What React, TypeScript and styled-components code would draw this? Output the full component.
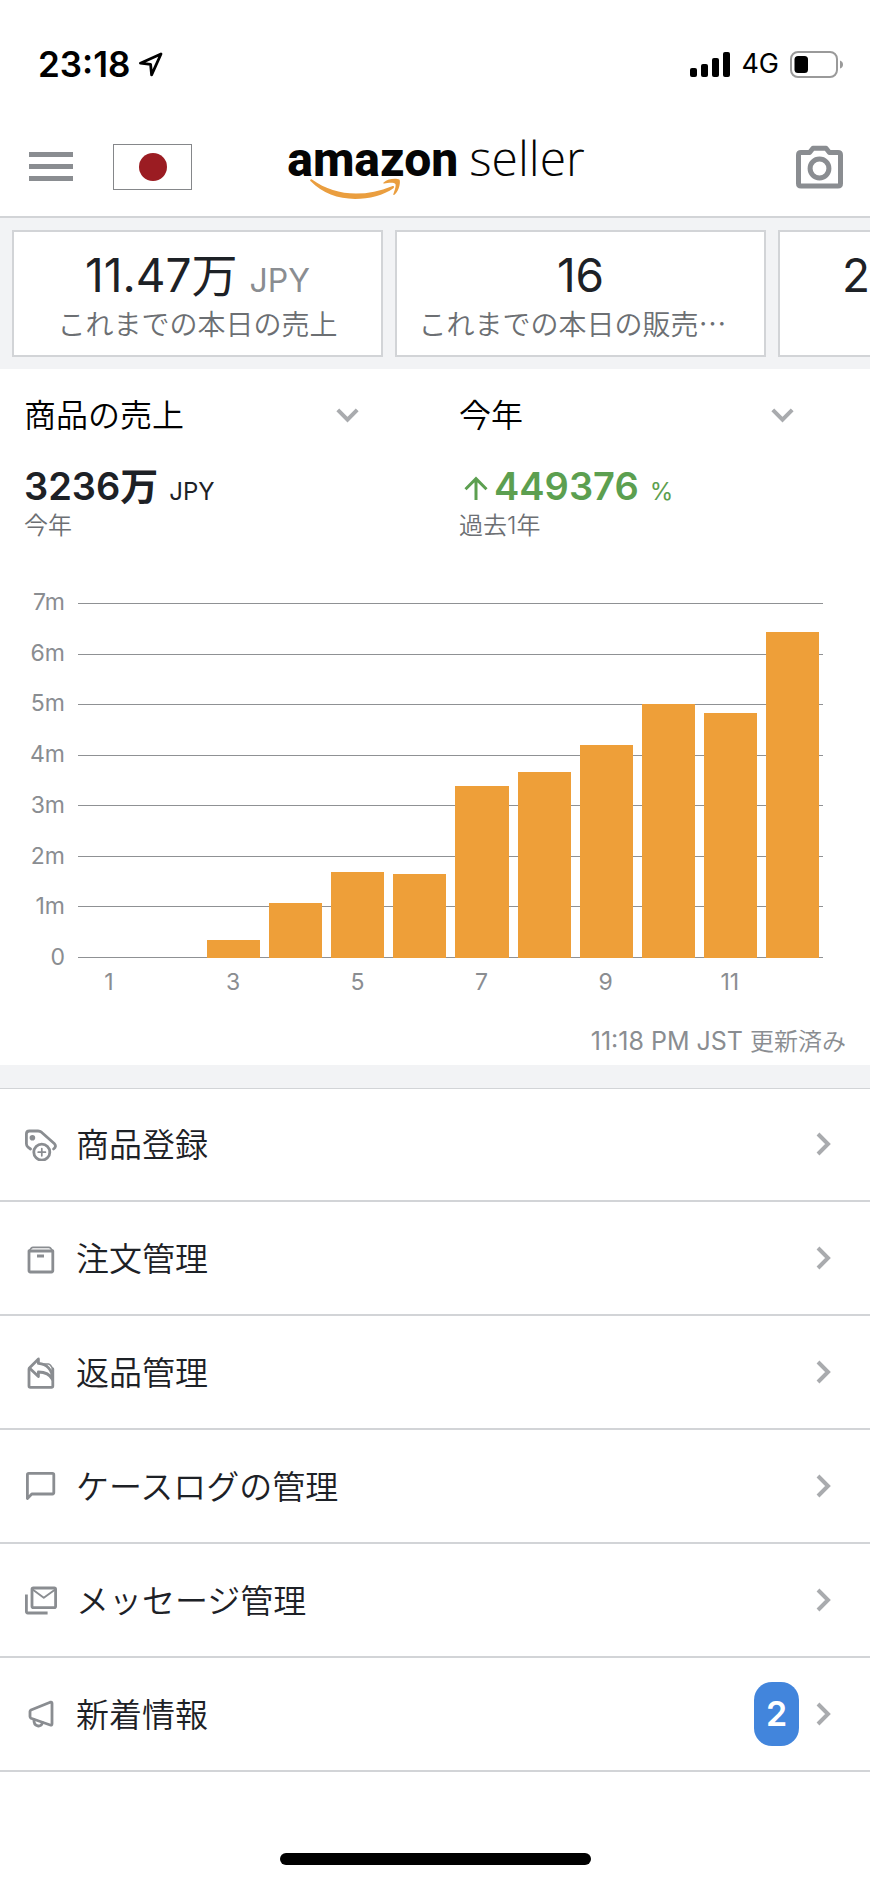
import React from 'react';
import styled, { createGlobalStyle } from 'styled-components';

const GlobalStyle = createGlobalStyle`
  *, *::before, *::after { box-sizing: border-box; }
  body {
    margin: 0;
    background: #ffffff;
    color: #1d2126;
    font-family: Inter, "Noto Sans CJK JP", sans-serif;
    font-weight: 400;
  }
  button, select { font: inherit; color: inherit; }
`;

const gray = '#8a8d91';
const line = '#d2d4d7';
const band = '#f2f3f5';

const Screen = styled.div`
  display: flex;
  flex-direction: column;
  min-height: 100vh;
`;

const StatusBar = styled.div`
  display: flex;
  align-items: center;
  justify-content: space-between;
  padding: 43px 26px 31px 38px;
  height: 116px;
  color: #000000;
`;

const StatusGroup = styled.div<{ $gap: number }>`
  display: flex;
  align-items: center;
  gap: ${(p) => p.$gap}px;
`;

const Clock = styled.time`
  font-size: 35px;
  line-height: 42px;
  font-weight: 600;
`;

const Network = styled.span`
  font-size: 27px;
  line-height: 42px;
  font-weight: 400;
`;

const Header = styled.header`
  display: grid;
  grid-template-columns: 1fr auto 1fr;
  align-items: center;
  height: 102px;
  padding: 2px 27px 0 29px;
  border-bottom: 2px solid ${line};
`;

const HeaderStart = styled.div`
  display: flex;
  align-items: center;
  gap: 40px;
`;

const IconButton = styled.button`
  display: flex;
  padding: 0;
  border: 0;
  background: none;
  color: ${gray};
  cursor: pointer;
`;

const CameraButton = styled(IconButton)`
  justify-self: end;
`;

const Flag = styled.button`
  display: flex;
  align-items: center;
  justify-content: center;
  width: 79px;
  height: 46px;
  padding: 0;
  border: 1px solid #85878a;
  background: #ffffff;
  cursor: pointer;
  &::before {
    content: '';
    width: 28px;
    height: 28px;
    border-radius: 50%;
    background: #9b1c22;
  }
`;

const Logo = styled.h1`
  position: relative;
  display: flex;
  align-items: baseline;
  gap: 11px;
  margin: 0 0 16px;
  color: #050505;
  line-height: 60px;
  font-weight: 400;
`;

const LogoName = styled.span`
  font-family: "Roboto", "Liberation Sans", sans-serif;
  font-size: 48px;
  font-weight: 800;
`;

const LogoProduct = styled.span`
  font-family: "Open Sans", "Noto Sans", sans-serif;
  font-size: 48px;
  font-weight: 300;
`;

const Smile = styled.svg`
  position: absolute;
  left: 23px;
  top: 50px;
`;

const Stats = styled.section`
  display: flex;
  gap: 12px;
  padding: 12px;
  background: ${band};
  overflow: hidden;
`;

const StatCard = styled.article<{ $start?: boolean }>`
  flex: 0 0 371px;
  height: 127px;
  padding: ${(p) => (p.$start ? '15px 0 0 62px' : '15px 0 0')};
  border: 2px solid ${line};
  background: #ffffff;
  text-align: ${(p) => (p.$start ? 'left' : 'center')};
  white-space: nowrap;
`;

const StatValue = styled.div`
  height: 56px;
  font-size: 46px;
  line-height: 56px;
`;

const StatUnit = styled.span`
  margin-left: 12px;
  font-size: 32px;
  color: ${gray};
`;

const StatLabel = styled.div<{ $clipped?: boolean }>`
  height: 40px;
  padding-right: ${(p) => (p.$clipped ? 16 : 0)}px;
  font-family: "Noto Sans CJK JP", sans-serif;
  font-size: 28px;
  line-height: 40px;
  font-weight: 350;
  color: #6c6f73;
`;

const Summary = styled.section`
  display: grid;
  grid-template-columns: 1fr 1fr;
  padding-top: 22px;
`;

const SummaryColumn = styled.div`
  padding: 0 76px 0 24px;
`;

const Picker = styled.label`
  display: flex;
  align-items: center;
  height: 48px;
  color: #a9abae;
`;

const PickerSelect = styled.select`
  flex: 1;
  min-width: 0;
  height: 48px;
  padding: 2px 0 0;
  border: 0;
  appearance: none;
  background: none;
  color: #000000;
  font-size: 32px;
  font-weight: 350;
  line-height: 46px;
`;

const Figure = styled.div<{ $up?: boolean }>`
  display: flex;
  align-items: baseline;
  gap: 11px;
  height: 48px;
  margin-top: 23px;
  line-height: 48px;
  white-space: nowrap;
  color: ${(p) => (p.$up ? '#5c9f50' : 'inherit')};
`;

const FigureValue = styled.strong`
  font-size: 38px;
  font-weight: 600;
`;

const FigureUnit = styled.span`
  font-size: 24px;
`;

const UpArrow = styled.svg`
  margin: 0 6px 0 5px;
`;

const FigureNote = styled.div`
  height: 32px;
  font-size: 24px;
  line-height: 32px;
  font-weight: 350;
  color: #6c6f73;
`;

const Chart = styled.div`
  display: grid;
  grid-template-columns: 65px 1fr;
  column-gap: 13px;
  padding: 61px 47px 0 0;
  font-size: 23px;
  line-height: 28px;
  color: ${gray};
`;

const YAxis = styled.div`
  display: flex;
  flex-direction: column;
  justify-content: space-between;
  margin: -15px 0 -13px;
  text-align: right;
`;

const Plot = styled.div`
  display: grid;
  height: 355px;
`;

const GridLines = styled.div`
  grid-area: 1 / 1;
  display: flex;
  flex-direction: column;
  justify-content: space-between;
`;

const GridLine = styled.div`
  height: 1px;
  background: #8f9194;
`;

const Bars = styled.div`
  grid-area: 1 / 1;
  display: grid;
  grid-template-columns: repeat(12, 1fr);
  align-items: end;
  height: 355px;
`;

const Bar = styled.div`
  margin: 0 4px 0 5px;
  background: #ee9f39;
`;

const XAxis = styled.div`
  grid-column: 2;
  display: grid;
  grid-template-columns: repeat(12, 1fr);
  margin-top: 10px;
  text-align: center;
`;

const Updated = styled.p`
  margin: 29px 24px 7px;
  font-size: 25px;
  line-height: 32px;
  font-weight: 400;
  text-align: right;
  color: ${gray};
`;

const UpdatedText = styled.span`
  font-size: 24px;
  font-weight: 350;
`;

const Menu = styled.nav`
  border-top: 23px solid ${band};
  box-shadow: inset 0 1px 0 ${line};
`;

const MenuRow = styled.a`
  display: flex;
  align-items: center;
  height: 114px;
  padding: 0 39px 0 25px;
  border-bottom: 2px solid ${line};
  color: inherit;
  text-decoration: none;
`;

const MenuIcon = styled.svg`
  flex: none;
  margin-right: 19px;
  color: ${gray};
`;

const MenuLabel = styled.span`
  flex: 1;
  padding-top: 2px;
  font-size: 33px;
  line-height: 48px;
  font-weight: 350;
`;

const Badge = styled.span`
  width: 45px;
  height: 64px;
  margin-right: 17px;
  border-radius: 18px;
  background: #4285dc;
  color: #ffffff;
  font-size: 34px;
  font-weight: 600;
  line-height: 64px;
  text-align: center;
`;

const HomeBar = styled.div`
  width: 311px;
  height: 12px;
  margin: auto auto 19px;
  border-radius: 6px;
  background: #000000;
`;

const stroke = {
  fill: 'none',
  stroke: 'currentColor',
  strokeWidth: 2.8,
  strokeLinejoin: 'round' as const,
  strokeLinecap: 'round' as const,
};

const menu: { label: string; icon: React.ReactNode; badge?: number }[] = [
  {
    label: '商品登録',
    icon: (
      <>
        <path d="M5.5 22 3 20.2Q1.4 18.8 1.4 16.8V7Q1.4 4 4.4 4H13Q15 4 16.5 5.2L29.5 16.8Q31.8 19.5 28.6 22" />
        <circle cx="7.4" cy="10.8" r="2.8" fill="currentColor" stroke="none" />
        <circle cx="16.8" cy="25.2" r="8" />
        <path d="M16.8 21.6v7.2M13.2 25.2h7.2" strokeWidth="1.7" />
      </>
    ),
  },
  {
    label: '注文管理',
    icon: (
      <>
        <path d="M4 10H27.8V29.6Q27.8 31 26.4 31H5.4Q4 31 4 29.6Z" />
        <path d="M4 10 6.2 7.2Q7 6.4 8 6.4H23.8Q24.8 6.4 25.6 7.2L27.8 10" strokeWidth="1.7" />
        <path d="M12 15h7" strokeWidth="3" strokeLinecap="butt" />
      </>
    ),
  },
  {
    label: '返品管理',
    icon: (
      <>
        <path d="M4 14V31Q4 32.4 5.4 32.4H26.4Q27.8 32.4 27.8 31V14" />
        <path d="M13.4 4 4.4 13 13.4 21.6V17C20 17 24.6 18.6 27.6 24.6 27.6 15 22 9 13.4 8.4Z" />
        <path d="M19 9H23.5Q25.5 9.2 27.8 14" strokeWidth="1.7" />
      </>
    ),
  },
  {
    label: 'ケースログの管理',
    icon: <path d="M2.4 29.6V5.8Q2.4 4.4 3.8 4.4H27.4Q28.8 4.4 28.8 5.8V23.6Q28.8 25 27.4 25H6.8Z" />,
  },
  {
    label: 'メッセージ管理',
    icon: (
      <>
        <rect x="7" y="5" width="23.6" height="19.6" rx="1.4" />
        <path d="m7.6 6.4 11.2 8.4L30.2 6.4" strokeWidth="1.9" />
        <path d="M1.4 11.4V28.6Q1.4 30 2.8 30H22.6" strokeLinecap="butt" />
      </>
    ),
  },
  {
    label: '新着情報',
    badge: 2,
    icon: (
      <>
        <path d="M25.2 5.2Q27 4.6 27 6.2V26.8Q27 28.6 25.2 28L6 21.2Q5 20.6 5 19.6V14.6Q5 13.6 6 13Z" />
        <path d="M9 22.6C8.4 29.8 16.8 31.2 17.4 25.4" />
      </>
    ),
  },
];

const monthly = [0, 0, 0.35, 1.09, 1.7, 1.66, 3.4, 3.66, 4.2, 5.01, 4.84, 6.42];
const maxValue = 7;
const yLabels = ['7m', '6m', '5m', '4m', '3m', '2m', '1m', '0'];

const ChevronDown = () => (
  <svg width="23" height="15" viewBox="0 0 23 15" aria-hidden="true">
    <path d="M1.8 1.8 11.5 11.6 21.2 1.8" fill="none" stroke="currentColor" strokeWidth="4" />
  </svg>
);

const ChevronRight = () => (
  <svg width="15" height="24" viewBox="0 0 15 24" aria-hidden="true">
    <path d="M2 2 12 12 2 22" fill="none" stroke="#a9abae" strokeWidth="4" />
  </svg>
);

export default function App() {
  return (
    <Screen lang="ja">
      <GlobalStyle />
      <StatusBar>
        <StatusGroup $gap={8}>
          <Clock>23:18</Clock>
          <svg width="25" height="25" viewBox="0 0 25 25" aria-hidden="true">
            <path
              d="M23 2 2.4 11.2 12.6 12.4 13.6 22.8Z"
              fill="none"
              stroke="currentColor"
              strokeWidth="2.8"
              strokeLinejoin="round"
            />
          </svg>
        </StatusGroup>
        <StatusGroup $gap={11}>
          <svg width="40" height="26" viewBox="0 0 40 26" aria-hidden="true">
            <rect x="0" y="17" width="7" height="9" rx="2" />
            <rect x="11" y="13" width="7" height="13" rx="2" />
            <rect x="22" y="7" width="7" height="19" rx="2" />
            <rect x="33" y="1" width="7" height="25" rx="2" />
          </svg>
          <Network>4G</Network>
          <svg width="54" height="27" viewBox="0 0 54 27" aria-hidden="true">
            <rect x="1" y="1" width="46" height="25" rx="7" fill="none" stroke="#9a9a9a" strokeWidth="2" />
            <rect x="4.5" y="5" width="13.5" height="17" rx="3.5" />
            <path d="M50 9.5Q53 10.5 53 13.5T50 17.5Z" fill="#9a9a9a" />
          </svg>
        </StatusGroup>
      </StatusBar>

      <Header>
        <HeaderStart>
          <IconButton type="button" aria-label="メニュー">
            <svg width="44" height="30" viewBox="0 0 44 30" fill="currentColor" aria-hidden="true">
              <rect y="0" width="44" height="5" />
              <rect y="12" width="44" height="5" />
              <rect y="24" width="44" height="5" />
            </svg>
          </IconButton>
          <Flag type="button" aria-label="日本" />
        </HeaderStart>
        <Logo>
          <LogoName>amazon</LogoName>
          <LogoProduct>seller</LogoProduct>
          <Smile width="92" height="22" viewBox="0 0 92 22" aria-hidden="true">
            <path
              d="M.6 1.4C-.2 2 0 2.8 1 3.6 12 15 28 21 45 21 59 21 74 17 83.4 10.2 84.8 9 83.8 7.4 82 8.2 70 13 58 15.6 46 15.6 30 15.6 15 11 2 1.6 1.4 1.2 1 1.2.6 1.4Z"
              fill="#ea9e3f"
            />
            <path
              d="M73.6 4.4C78 .6 86 .2 89.4 1.6 90.8 3.8 89.4 12.4 84.8 16.6 83.8 17.4 83 17 83.4 16 84.6 12.8 86.2 8 85.4 6 84.4 4.2 78 4.8 74.4 5.4 73.2 5.6 73 5 73.6 4.4Z"
              fill="#ea9e3f"
            />
          </Smile>
        </Logo>
        <CameraButton type="button" aria-label="カメラ">
          <svg width="47" height="44" viewBox="0 0 47 44" fill="none" stroke="currentColor" strokeWidth="5" strokeLinejoin="round" aria-hidden="true">
            <path d="M5 7.5H13.6L17 3.2H30L33.4 7.5H42Q44.5 7.5 44.5 10V38.5Q44.5 41 42 41H5Q2.5 41 2.5 38.5V10Q2.5 7.5 5 7.5Z" />
            <circle cx="23.5" cy="23.5" r="9.4" />
          </svg>
        </CameraButton>
      </Header>

      <Stats>
        <StatCard>
          <StatValue>
            11.47万<StatUnit>JPY</StatUnit>
          </StatValue>
          <StatLabel>これまでの本日の売上</StatLabel>
        </StatCard>
        <StatCard>
          <StatValue>16</StatValue>
          <StatLabel $clipped>これまでの本日の販売…</StatLabel>
        </StatCard>
        <StatCard $start>
          <StatValue>2</StatValue>
        </StatCard>
      </Stats>

      <Summary>
        <SummaryColumn>
          <Picker>
            <PickerSelect aria-label="指標" defaultValue="sales">
              <option value="sales">商品の売上</option>
            </PickerSelect>
            <ChevronDown />
          </Picker>
          <Figure>
            <FigureValue>3236万</FigureValue>
            <FigureUnit>JPY</FigureUnit>
          </Figure>
          <FigureNote>今年</FigureNote>
        </SummaryColumn>
        <SummaryColumn>
          <Picker>
            <PickerSelect aria-label="期間" defaultValue="year">
              <option value="year">今年</option>
            </PickerSelect>
            <ChevronDown />
          </Picker>
          <Figure $up>
            <FigureValue>
              <UpArrow width="24" height="24" viewBox="0 0 24 24" aria-hidden="true">
                <path d="M12 24V3M1.5 13.2 12 2.7 22.5 13.2" fill="none" stroke="currentColor" strokeWidth="3" />
              </UpArrow>
              449376
            </FigureValue>
            <FigureUnit>%</FigureUnit>
          </Figure>
          <FigureNote>過去1年</FigureNote>
        </SummaryColumn>
      </Summary>

      <Chart>
        <YAxis>
          {yLabels.map((label) => (
            <span key={label}>{label}</span>
          ))}
        </YAxis>
        <Plot>
          <GridLines>
            {yLabels.map((label) => (
              <GridLine key={label} />
            ))}
          </GridLines>
          <Bars>
            {monthly.map((value, i) => (
              <Bar key={i} style={{ height: `${(value / maxValue) * 100}%` }} />
            ))}
          </Bars>
        </Plot>
        <XAxis>
          {monthly.map((_, i) => (
            <span key={i}>{i % 2 === 0 ? i + 1 : ''}</span>
          ))}
        </XAxis>
      </Chart>
      <Updated>
        11:18 PM JST <UpdatedText>更新済み</UpdatedText>
      </Updated>

      <Menu>
        {menu.map((item) => (
          <MenuRow key={item.label} href="#">
            <MenuIcon width="32" height="34" viewBox="0 0 32 34" aria-hidden="true" {...stroke}>
              {item.icon}
            </MenuIcon>
            <MenuLabel>{item.label}</MenuLabel>
            {item.badge && <Badge>{item.badge}</Badge>}
            <ChevronRight />
          </MenuRow>
        ))}
      </Menu>
      <HomeBar />
    </Screen>
  );
}
